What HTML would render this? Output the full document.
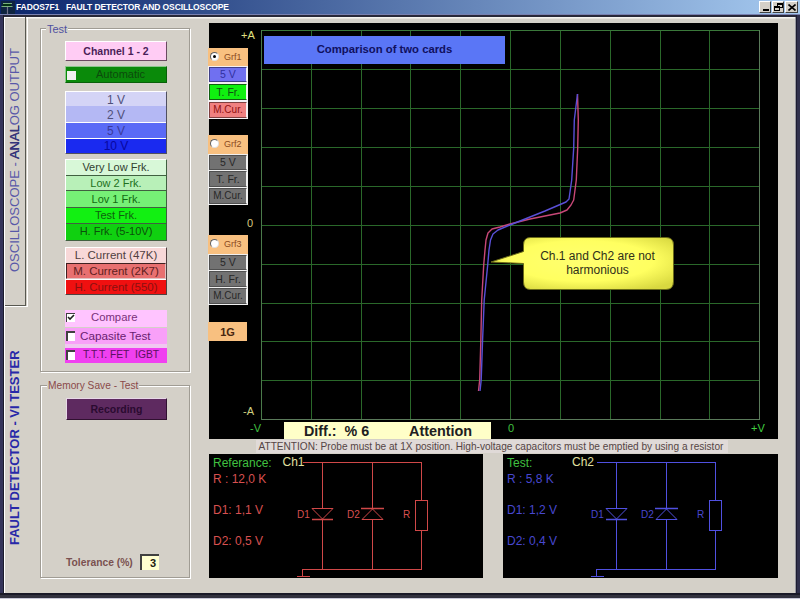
<!DOCTYPE html>
<html><head><meta charset="utf-8">
<style>
*{box-sizing:border-box}
html,body{margin:0;padding:0}
body{width:800px;height:599px;overflow:hidden;position:relative;background:#D4D0C8;font-family:"Liberation Sans",sans-serif}
.a{position:absolute}
.t{position:absolute;white-space:nowrap;line-height:1}
#title{left:0;top:0;width:800px;height:14px;background:linear-gradient(to right,#0A246A 0%,#A6CAF0 100%)}
.btn{position:absolute;background:#D4D0C8;border-top:1px solid #fff;border-left:1px solid #fff;border-right:1px solid #404040;border-bottom:1px solid #404040}
.grp{position:absolute;border:1px solid #A09C94;box-shadow:inset 1px 1px 0 #fff,1px 1px 0 #fff}
.lbl{position:absolute;background:#D4D0C8;padding:0 1px;white-space:nowrap;line-height:1}
.b3{position:absolute;border-top:1px solid #fff;border-left:1px solid #fff;border-right:1px solid #404040;border-bottom:1px solid #404040;text-align:center;white-space:nowrap}
.gb{position:absolute;text-align:center;white-space:nowrap;border-top:1px solid #e8e8e8;border-left:1px solid #e8e8e8;border-right:1px solid #303030;border-bottom:1px solid #303030;font-size:11px}
</style></head><body>

<!-- title bar -->
<div id="title" class="a"></div>
<div class="a" style="left:0;top:14px;width:800px;height:1px;background:#7880B0"></div>
<div class="a" style="left:0;top:15px;width:800px;height:2px;background:#282838"></div>
<div class="a" style="left:5px;top:17px;width:790px;height:1px;background:#F4F4F0"></div>
<div class="a" style="left:5px;top:18px;width:790px;height:1px;background:#E6E4DE"></div>
<!-- icon -->
<svg class="a" style="left:0;top:0" width="16" height="14" viewBox="0 0 16 14">
<rect x="1" y="1" width="14" height="13" fill="#0E2440"/>
<path d="M3 3.5 H12 M1.5 6.5 H12.5" stroke="#78B080" stroke-width="1.2"/>
<path d="M3 5 H11" stroke="#003800" stroke-width="1.5"/>
<path d="M7.5 7 V14" stroke="#707088" stroke-width="1.2"/>
</svg>
<div class="t" style="left:16px;top:3px;font-size:8.5px;font-weight:bold;color:#fff;letter-spacing:-0.1px">FADOS7F1&nbsp;&nbsp;&nbsp;FAULT DETECTOR AND OSCILLOSCOPE</div>
<!-- window buttons -->
<div class="btn" style="left:759px;top:1px;width:12px;height:12px"><div class="a" style="left:3px;top:7px;width:6px;height:2px;background:#000"></div></div>
<div class="btn" style="left:772px;top:1px;width:12px;height:12px">
 <div class="a" style="left:4px;top:1px;width:6px;height:5px;border:1px solid #000;border-top-width:2px"></div>
 <div class="a" style="left:1px;top:4px;width:6px;height:5px;border:1px solid #000;border-top-width:2px;background:#D4D0C8"></div>
</div>
<div class="btn" style="left:785px;top:1px;width:13px;height:12px"><svg class="a" style="left:2px;top:2px" width="8" height="7"><path d="M0.5 0.5 L7.5 6.5 M7.5 0.5 L0.5 6.5" stroke="#000" stroke-width="1.6"/></svg></div>

<!-- frame -->
<div class="a" style="left:0;top:15px;width:3px;height:578px;background:#34345A"></div>
<div class="a" style="left:3px;top:15px;width:1px;height:578px;background:#1C1C2C"></div>
<div class="a" style="left:4px;top:17px;width:1px;height:576px;background:#fff"></div>
<div class="a" style="left:795px;top:17px;width:1px;height:576px;background:#9898A0"></div>
<div class="a" style="left:796px;top:15px;width:1px;height:584px;background:#1C1C30"></div>
<div class="a" style="left:797px;top:15px;width:3px;height:584px;background:#30304C"></div>
<div class="a" style="left:0;top:593px;width:800px;height:2px;background:#1a1a28"></div>
<div class="a" style="left:0;top:595px;width:800px;height:3px;background:#32323f"></div>
<div class="a" style="left:0;top:598px;width:800px;height:1px;background:#c8c8d8"></div>

<!-- tabs -->
<div class="a" style="left:5px;top:17px;width:20px;height:288px;background:#D4D0C8"></div>
<div class="a" style="left:25px;top:17px;width:1px;height:289px;background:#585850"></div>
<div class="a" style="left:5px;top:305px;width:21px;height:1px;background:#585850"></div>
<div class="a" style="left:5px;top:306px;width:22px;height:1px;background:#fff"></div>
<div class="a" style="left:27px;top:17px;width:1px;height:290px;background:#fff"></div>
<div class="a" style="left:5px;top:17px;width:20px;height:1px;background:#fff"></div>
<div class="t" style="left:48px;top:154px;width:224px;height:13px;font-size:13px;color:#5858A8;transform:rotate(-90deg);transform-origin:0 0;left:8px;top:272px">OSCILLOSCOPE - <span style="color:#34347A;text-shadow:0.5px 0 0 #34347A">ANAL</span>OG OUTPUT</div>
<div class="t" style="font-size:13px;font-weight:bold;color:#2828A8;transform:rotate(-90deg);transform-origin:0 0;left:8px;top:545px">FAULT DETECTOR - VI TESTER</div>

<!-- Test group -->
<div class="grp" style="left:40px;top:28px;width:150px;height:344px"></div>
<div class="lbl" style="left:46px;top:24px;font-size:11px;color:#5050A0">Test</div>

<div class="b3" style="left:65px;top:41px;width:102px;height:20px;background:#FFCCF4;border-right-color:#6a4a60;border-bottom-color:#6a4a60;font-size:10.5px;font-weight:bold;color:#4a1e58;line-height:18px">Channel 1 - 2</div>

<div class="a" style="left:65px;top:66px;width:102px;height:17px;background:#0A8A0A;border:1px solid #086008;border-top-color:#8ac88a;border-left-color:#8ac88a"></div>
<div class="a" style="left:67px;top:71px;width:9px;height:9px;background:#F0F0F0"></div>
<div class="t" style="left:96px;top:69px;font-size:11px;color:#0C4A0C">Automatic</div>

<!-- volts -->
<div class="a" style="left:65px;top:91px;width:102px;height:63px;border-top:1px solid #fff;border-left:1px solid #fff;border-right:1px solid #505060;border-bottom:1px solid #505060;background:#fff"></div>
<div class="a" style="left:66px;top:92px;width:100px;height:14px;background:#D4D4F6"></div>
<div class="a" style="left:66px;top:106px;width:100px;height:16px;background:#B4B8F4"></div>
<div class="a" style="left:66px;top:123px;width:100px;height:15px;background:#5A6AF6"></div>
<div class="a" style="left:66px;top:139px;width:100px;height:14px;background:#1A2AF0"></div>
<div class="t" style="left:66px;width:100px;text-align:center;top:94px;font-size:12px;color:#50507A">1 V</div>
<div class="t" style="left:66px;width:100px;text-align:center;top:109px;font-size:12px;color:#50507A">2 V</div>
<div class="t" style="left:66px;width:100px;text-align:center;top:125px;font-size:12px;color:#3a3a9a">5 V</div>
<div class="t" style="left:66px;width:100px;text-align:center;top:140px;font-size:12px;color:#0808A0">10 V</div>

<!-- freqs -->
<div class="a" style="left:65px;top:159px;width:102px;height:82px;border-top:1px solid #fff;border-left:1px solid #fff;border-right:1px solid #406040;border-bottom:1px solid #406040;background:#406040"></div>
<div class="a" style="left:66px;top:160px;width:100px;height:15px;background:#D8F8D8"></div>
<div class="a" style="left:66px;top:176px;width:100px;height:14px;background:#B8F0B8"></div>
<div class="a" style="left:66px;top:191px;width:100px;height:16px;background:#76F076"></div>
<div class="a" style="left:66px;top:208px;width:100px;height:15px;background:#12F012"></div>
<div class="a" style="left:66px;top:224px;width:100px;height:16px;background:#10D010"></div>
<div class="t" style="left:66px;width:100px;text-align:center;top:162px;font-size:11px;color:#304030">Very Low Frk.</div>
<div class="t" style="left:66px;width:100px;text-align:center;top:178px;font-size:11px;color:#207020">Low 2 Frk.</div>
<div class="t" style="left:66px;width:100px;text-align:center;top:194px;font-size:11px;color:#106A10">Lov 1 Frk.</div>
<div class="t" style="left:66px;width:100px;text-align:center;top:210px;font-size:11px;color:#0E600E">Test Frk.</div>
<div class="t" style="left:66px;width:100px;text-align:center;top:226px;font-size:11px;color:#0A500A">H. Frk. (5-10V)</div>

<!-- currents -->
<div class="a" style="left:65px;top:247px;width:102px;height:48px;border-top:1px solid #fff;border-left:1px solid #fff;border-right:1px solid #504040;border-bottom:1px solid #504040;background:#fff"></div>
<div class="a" style="left:66px;top:248px;width:100px;height:15px;background:#F8D8D8"></div>
<div class="a" style="left:66px;top:263px;width:100px;height:16px;background:#E87070;border:1px solid #402020;border-right-color:#e0c0c0;border-bottom-color:#e0c0c0"></div>
<div class="a" style="left:66px;top:280px;width:100px;height:14px;background:#F01010"></div>
<div class="t" style="left:66px;width:100px;text-align:center;top:250px;font-size:11.5px;color:#504040">L. Current (47K)</div>
<div class="t" style="left:66px;width:100px;text-align:center;top:266px;font-size:11.5px;color:#602020">M. Current (2K7)</div>
<div class="t" style="left:66px;width:100px;text-align:center;top:282px;font-size:11.5px;color:#8A1010">H. Current (550)</div>

<!-- checks -->
<div class="a" style="left:65px;top:310px;width:102px;height:17px;background:#FFC4FF"></div>
<div class="a" style="left:65px;top:328px;width:102px;height:16px;background:#F8A0F8"></div>
<div class="a" style="left:65px;top:344px;width:102px;height:4px;background:#F0C8F0"></div>
<div class="a" style="left:65px;top:348px;width:102px;height:15px;background:#F040F0"></div>
<div class="a" style="left:66px;top:313px;width:9px;height:9px;background:#fff;border-top:1px solid #404040;border-left:1px solid #404040"></div>
<svg class="a" style="left:66px;top:313px" width="9" height="9"><path d="M2 4 L4 6 L8 2" stroke="#202020" stroke-width="1.6" fill="none"/></svg>
<div class="a" style="left:66px;top:331px;width:9px;height:10px;background:#fff;border-top:2px solid #404040;border-left:2px solid #404040"></div>
<div class="a" style="left:66px;top:350px;width:9px;height:10px;background:#fff;border-top:2px solid #404040;border-left:2px solid #404040"></div>
<div class="t" style="left:91px;top:312px;font-size:11.3px;color:#7A307A">Compare</div>
<div class="t" style="left:80px;top:330px;font-size:11.7px;color:#6A2070">Capasite Test</div>
<div class="t" style="left:83px;top:350px;font-size:10.3px;color:#5A1060">T.T.T. FET&nbsp; IGBT</div>

<!-- Memory group -->
<div class="grp" style="left:40px;top:385px;width:150px;height:193px"></div>
<div class="lbl" style="left:47px;top:381px;font-size:10.2px;color:#8A4A4A">Memory Save - Test</div>
<div class="b3" style="left:66px;top:398px;width:101px;height:22px;background:#5E2A60;border-top-color:#e8d8e8;border-left-color:#e8d8e8;border-right-color:#301030;border-bottom-color:#301030;font-size:10.5px;font-weight:bold;color:#2A0A30;line-height:20px">Recording</div>

<div class="t" style="left:66px;top:558px;font-size:10.3px;font-weight:bold;color:#7A5050">Tolerance (%)</div>
<div class="a" style="left:140px;top:554px;width:19px;height:16px;background:#FFFFD0;border-top:2px solid #404040;border-left:2px solid #404040"></div>
<div class="t" style="left:150px;top:558px;font-size:11px;font-weight:bold;color:#202010">3</div>

<!-- scope -->
<div class="a" style="left:209px;top:23px;width:569px;height:416px;background:#000"></div>
<div class="a" style="left:311px;top:31px;width:1px;height:388px;background:#2A682A"></div>
<div class="a" style="left:361px;top:31px;width:1px;height:388px;background:#2A682A"></div>
<div class="a" style="left:410px;top:31px;width:1px;height:388px;background:#2A682A"></div>
<div class="a" style="left:460px;top:31px;width:1px;height:388px;background:#2A682A"></div>
<div class="a" style="left:510px;top:31px;width:1px;height:388px;background:#2A682A"></div>
<div class="a" style="left:560px;top:31px;width:1px;height:388px;background:#2A682A"></div>
<div class="a" style="left:610px;top:31px;width:1px;height:388px;background:#2A682A"></div>
<div class="a" style="left:660px;top:31px;width:1px;height:388px;background:#2A682A"></div>
<div class="a" style="left:709px;top:31px;width:1px;height:388px;background:#2A682A"></div>
<div class="a" style="left:262px;top:69px;width:497px;height:1px;background:#2A682A"></div>
<div class="a" style="left:262px;top:108px;width:497px;height:1px;background:#2A682A"></div>
<div class="a" style="left:262px;top:147px;width:497px;height:1px;background:#2A682A"></div>
<div class="a" style="left:262px;top:186px;width:497px;height:1px;background:#2A682A"></div>
<div class="a" style="left:262px;top:225px;width:497px;height:1px;background:#2A682A"></div>
<div class="a" style="left:262px;top:264px;width:497px;height:1px;background:#2A682A"></div>
<div class="a" style="left:262px;top:303px;width:497px;height:1px;background:#2A682A"></div>
<div class="a" style="left:262px;top:341px;width:497px;height:1px;background:#2A682A"></div>
<div class="a" style="left:262px;top:380px;width:497px;height:1px;background:#2A682A"></div>
<div class="a" style="left:261px;top:30px;width:499px;height:1px;background:#3A783A"></div>
<div class="a" style="left:261px;top:419px;width:499px;height:1px;background:#5A7A5A"></div>
<div class="a" style="left:261px;top:30px;width:1px;height:390px;background:#4A7A4A"></div>
<div class="a" style="left:759px;top:30px;width:1px;height:390px;background:#5A7A5A"></div>

<!-- Grf panels -->
<div class="a" style="left:208px;top:48px;width:40px;height:18px;background:#F8C080"></div>
<div class="a" style="left:210px;top:52px;width:9px;height:9px;border-radius:50%;background:#fff;border:1px solid #606060;border-right-color:#e0e0e0;border-bottom-color:#e0e0e0"></div><div class="a" style="left:213px;top:55px;width:3px;height:3px;border-radius:50%;background:#000"></div>
<div class="t" style="left:224px;top:53px;font-size:9px;color:#8A4A20">Grf1</div>
<div class="a" style="left:208px;top:66px;width:40px;height:53px;background:#f4f0f4"></div>
<div class="gb" style="left:209px;top:67px;width:38px;height:15px;background:#7070F0;color:#3030A0;border-color:#404088 #f0f0f0 #404088 #404088;line-height:13px;font-size:10.5px">5 V</div>
<div class="gb" style="left:209px;top:84px;width:38px;height:16px;background:#10F010;color:#105010;border-color:#106010 #f0f0f0 #106010 #106010;line-height:14px;font-size:10.5px">T. Fr.</div>
<div class="gb" style="left:209px;top:102px;width:38px;height:16px;background:#F08080;color:#901010;border-color:#804040 #f0f0f0 #804040 #804040;line-height:14px;font-size:10px">M.Cur.</div>
<div class="a" style="left:208px;top:135px;width:40px;height:19px;background:#F8C080"></div>
<div class="a" style="left:210px;top:139px;width:9px;height:9px;border-radius:50%;background:#fff;border:1px solid #606060;border-right-color:#e0e0e0;border-bottom-color:#e0e0e0"></div>
<div class="t" style="left:224px;top:140px;font-size:9px;color:#8A4A20">Grf2</div>
<div class="a" style="left:208px;top:154px;width:40px;height:51px;background:#f0f0f0"></div>
<div class="gb" style="left:209px;top:155px;width:38px;height:15px;background:#727272;color:#282828;border-color:#505050 #f0f0f0 #505050 #505050;line-height:13px;font-size:10.5px">5 V</div>
<div class="gb" style="left:209px;top:171px;width:38px;height:16px;background:#727272;color:#282828;border-color:#505050 #f0f0f0 #505050 #505050;line-height:14px;font-size:10.5px">T. Fr.</div>
<div class="gb" style="left:209px;top:188px;width:38px;height:16px;background:#727272;color:#282828;border-color:#505050 #f0f0f0 #505050 #505050;line-height:14px;font-size:10px">M.Cur.</div>
<div class="a" style="left:208px;top:235px;width:40px;height:19px;background:#F8C080"></div>
<div class="a" style="left:210px;top:239px;width:9px;height:9px;border-radius:50%;background:#fff;border:1px solid #606060;border-right-color:#e0e0e0;border-bottom-color:#e0e0e0"></div>
<div class="t" style="left:224px;top:240px;font-size:9px;color:#8A4A20">Grf3</div>
<div class="a" style="left:208px;top:254px;width:40px;height:51px;background:#f0f0f0"></div>
<div class="gb" style="left:209px;top:255px;width:38px;height:15px;background:#727272;color:#282828;border-color:#505050 #f0f0f0 #505050 #505050;line-height:13px;font-size:10.5px">5 V</div>
<div class="gb" style="left:209px;top:271px;width:38px;height:16px;background:#727272;color:#282828;border-color:#505050 #f0f0f0 #505050 #505050;line-height:14px;font-size:10.5px">H. Fr.</div>
<div class="gb" style="left:209px;top:288px;width:38px;height:16px;background:#727272;color:#282828;border-color:#505050 #f0f0f0 #505050 #505050;line-height:14px;font-size:10px">M.Cur.</div>
<div class="a" style="left:208px;top:322px;width:39px;height:19px;background:#F8C080;text-align:center;font-size:11px;font-weight:bold;color:#482810;line-height:21px">1G</div>

<!-- axis labels -->
<div class="t" style="left:241px;top:30px;font-size:11px;color:#E0E080">+A</div>
<div class="t" style="left:247px;top:218px;font-size:11px;color:#D8C880">0</div>
<div class="t" style="left:243px;top:406px;font-size:11px;color:#D0D080">-A</div>
<div class="t" style="left:250px;top:423px;font-size:11px;color:#40C040">-V</div>
<div class="t" style="left:508px;top:423px;font-size:11px;color:#40C040">0</div>
<div class="t" style="left:751px;top:423px;font-size:11px;color:#40D040">+V</div>

<!-- comparison -->
<div class="a" style="left:264px;top:36px;width:241px;height:28px;background:#5A76F6;text-align:center;font-size:11.3px;font-weight:bold;color:#101060;line-height:27px">Comparison of two cards</div>

<!-- diff -->
<div class="a" style="left:284px;top:422px;width:207px;height:17px;background:#FFFFC8"></div>
<div class="t" style="left:304px;top:424px;font-size:14.3px;font-weight:bold;color:#202020">Diff.:&nbsp; % 6</div>
<div class="t" style="left:409px;top:424px;font-size:14.4px;font-weight:bold;color:#202020">Attention</div>

<!-- attention line -->
<div class="a" style="left:256px;top:440px;width:472px;height:13px;background:#E0DAD8"></div>
<div class="t" style="left:258.5px;top:442px;font-size:10.1px;color:#554545">ATTENTION: Probe must be at 1X position. High-voltage capacitors must be emptied by using a resistor</div>

<!-- panels -->
<div class="a" style="left:209px;top:454px;width:274px;height:124px;background:#000"></div>
<div class="t" style="left:213px;top:457px;font-size:12px;color:#40C040">Referance:</div>
<div class="t" style="left:282.5px;top:456px;font-size:12px;color:#E0E0A0">Ch1</div>
<div class="t" style="left:213px;top:473px;font-size:12px;color:#D85050">R : 12,0 K</div>
<div class="t" style="left:213px;top:504px;font-size:12px;color:#D85050">D1: 1,1 V</div>
<div class="t" style="left:213px;top:535px;font-size:12px;color:#D85050">D2: 0,5 V</div>
<svg class="a" style="left:0;top:0" width="800" height="599" viewBox="0 0 800 599">
<g transform="translate(0,0)" stroke="#D04848" stroke-width="1" fill="none" shape-rendering="crispEdges">
<path d="M302.5 462.5 H421.5 V500.5 M421.5 530.5 V569.5 H302.5 V576"/>
<rect x="415.5" y="500.5" width="12" height="30"/>
<path d="M322.5 462.5 V508.5 M322.5 519.5 V569.5 M372.5 462.5 V508.5 M372.5 519.5 V569.5"/>
<path d="M296.5 576.5 H309.5"/>
</g>
<g transform="translate(0,0)" stroke="#D04848" stroke-width="1" fill="none">
<path d="M312 508.5 H333 L322.5 519 Z"/>
<path d="M312 519.5 H333" stroke-width="1.5"/>
<path d="M362 519.5 H383 L372.5 509 Z"/>
<path d="M361 508.5 H384" stroke-width="1.5"/>
</g>
<g transform="translate(0,0)" fill="#D85050" font-family="Liberation Sans" font-size="10">
<text x="297" y="518">D1</text>
<text x="347" y="518">D2</text>
<text x="403" y="518">R</text>
</g>
</svg>

<div class="a" style="left:503px;top:454px;width:275px;height:124px;background:#000"></div>
<div class="t" style="left:507px;top:457px;font-size:12px;color:#40C040">Test:</div>
<div class="t" style="left:572px;top:456px;font-size:12px;color:#E0E0A0">Ch2</div>
<div class="t" style="left:507px;top:473px;font-size:12px;color:#4848D0">R : 5,8 K</div>
<div class="t" style="left:507px;top:504px;font-size:12px;color:#4848D0">D1: 1,2 V</div>
<div class="t" style="left:507px;top:535px;font-size:12px;color:#4848D0">D2: 0,4 V</div>
<svg class="a" style="left:0;top:0" width="800" height="599" viewBox="0 0 800 599">
<g transform="translate(294,0)" stroke="#5050E0" stroke-width="1" fill="none" shape-rendering="crispEdges">
<path d="M302.5 462.5 H421.5 V500.5 M421.5 530.5 V569.5 H302.5 V576"/>
<rect x="415.5" y="500.5" width="12" height="30"/>
<path d="M322.5 462.5 V508.5 M322.5 519.5 V569.5 M372.5 462.5 V508.5 M372.5 519.5 V569.5"/>
<path d="M296.5 576.5 H309.5"/>
</g>
<g transform="translate(294,0)" stroke="#5050E0" stroke-width="1" fill="none">
<path d="M312 508.5 H333 L322.5 519 Z"/>
<path d="M312 519.5 H333" stroke-width="1.5"/>
<path d="M362 519.5 H383 L372.5 509 Z"/>
<path d="M361 508.5 H384" stroke-width="1.5"/>
</g>
<g transform="translate(294,0)" fill="#4848D0" font-family="Liberation Sans" font-size="10">
<text x="297" y="518">D1</text>
<text x="347" y="518">D2</text>
<text x="403" y="518">R</text>
</g>
</svg>

<!-- curves -->
<svg class="a" style="left:0;top:0" width="800" height="599" viewBox="0 0 800 599">
<path d="M478.5 391 L479.7 380 L480.8 342 L481.7 300 L483.7 265 L485 250 L486 240 L488 233 L492 229 L500 227 L510 224 L530 219 L560 213 L567 210 L571 205 L573.7 200 L576.3 180 L577.7 148 L578.3 120 L577.5 94" stroke="#C84878" stroke-width="1.4" fill="none" stroke-linejoin="round"/>
<path d="M480 391 L481.2 380 L482.5 342 L484.2 300 L487.7 265 L489 250 L490.5 240 L493 234 L498 230 L510 225 L545 211 L566 202 L569 199 L571.7 180 L573.7 148 L574.3 120 L577.5 94" stroke="#5A50D8" stroke-width="1.4" fill="none" stroke-linejoin="round"/>
</svg>

<!-- callout -->
<svg class="a" style="left:0;top:0" width="800" height="599" viewBox="0 0 800 599">
<defs><radialGradient id="yg" cx="50%" cy="45%" r="65%"><stop offset="0" stop-color="#FFFF70"/><stop offset="0.6" stop-color="#FFFF60"/><stop offset="1" stop-color="#D8D840"/></radialGradient></defs>
<path d="M530.5 237.5 H666 Q673.5 237.5 673.5 245 V281.5 Q673.5 289.5 666 289.5 H530.5 Q523.5 289.5 523.5 282 V263.5 L491 262 L523.5 251.5 V245 Q523.5 237.5 530.5 237.5 Z" fill="url(#yg)" stroke="#6A6A18" stroke-width="1"/>
</svg>
<div class="t" style="left:522px;width:151px;text-align:center;top:250px;font-size:12px;color:#303018">Ch.1 and Ch2 are not</div>
<div class="t" style="left:522px;width:151px;text-align:center;top:264px;font-size:12px;color:#303018">harmonious</div>

</body></html>
